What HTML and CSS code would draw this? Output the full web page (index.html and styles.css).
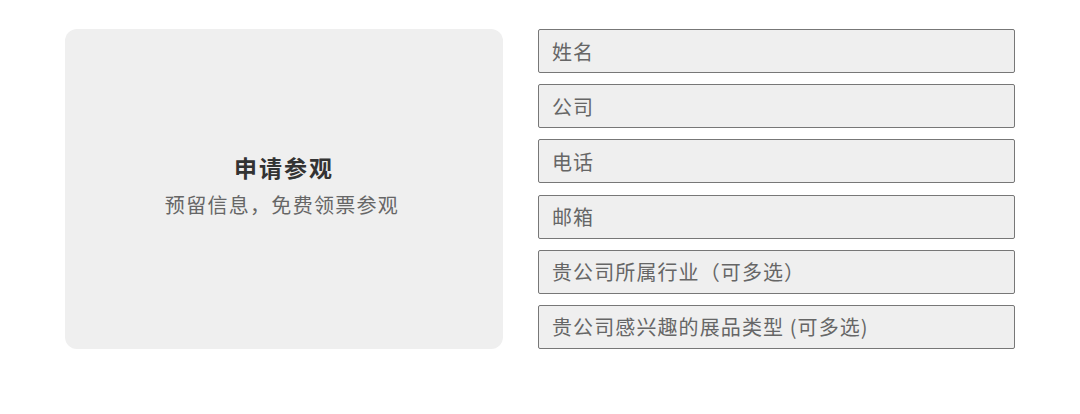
FILE: index.html
```html
<!DOCTYPE html>
<html lang="zh-CN">

<head>
  <meta charset="UTF-8" />
  <meta name="viewport" content="width=device-width, initial-scale=1.0" />
  <title>申请参观</title>
  <link rel="stylesheet" href="styles.css">
</head>

<body>
  <div class="container">
    <div class="intro">
      <h2>申请参观</h2>
      <p>预留信息，免费领票参观</p>
    </div>
    <form class="apply">
      <input type="text" placeholder="姓名" />
      <input type="text" placeholder="公司" />
      <input type="text" placeholder="电话" />
      <input type="text" placeholder="邮箱" />
      <input type="text" placeholder="贵公司所属行业（可多选）" />
      <input type="text" placeholder="贵公司感兴趣的展品类型 (可多选)" />
    </form>
  </div>
</body>

</html>
```

FILE: styles.css
```css
body {
  margin: 0;
  background-color: #fff;
  font-family: "Noto Sans CJK SC", "Noto Sans", sans-serif;
}

.container {
  display: flex;
  gap: 35px;
  padding: 29px 0 0 65px;
}

.intro {
  box-sizing: border-box;
  width: 438px;
  height: 320px;
  padding-bottom: 8px;
  background-color: #efefef;
  border-radius: 12px;
  display: flex;
  flex-direction: column;
  align-items: center;
  justify-content: center;
}

.intro h2 {
  margin: 0;
  font-size: 23px;
  font-weight: 700;
  letter-spacing: 2px;
  color: #333;
  line-height: 32px;
}

.intro p {
  margin: 7px 0 0 0;
  padding-right: 4px;
  font-size: 20px;
  letter-spacing: 1.3px;
  color: #666;
  line-height: 30px;
}

.apply {
  width: 477px;
  height: 320px;
  display: flex;
  flex-direction: column;
  justify-content: space-between;
}

.apply input {
  box-sizing: border-box;
  width: 100%;
  height: 44px;
  margin: 0;
  padding: 0 14px 0 13px;
  border: 1px solid #777;
  border-radius: 2px;
  background-color: #efefef;
  font-family: inherit;
  font-size: 20px;
  letter-spacing: 1.1px;
  color: #333;
  outline: none;
}

.apply input::placeholder {
  color: #666;
}
```
